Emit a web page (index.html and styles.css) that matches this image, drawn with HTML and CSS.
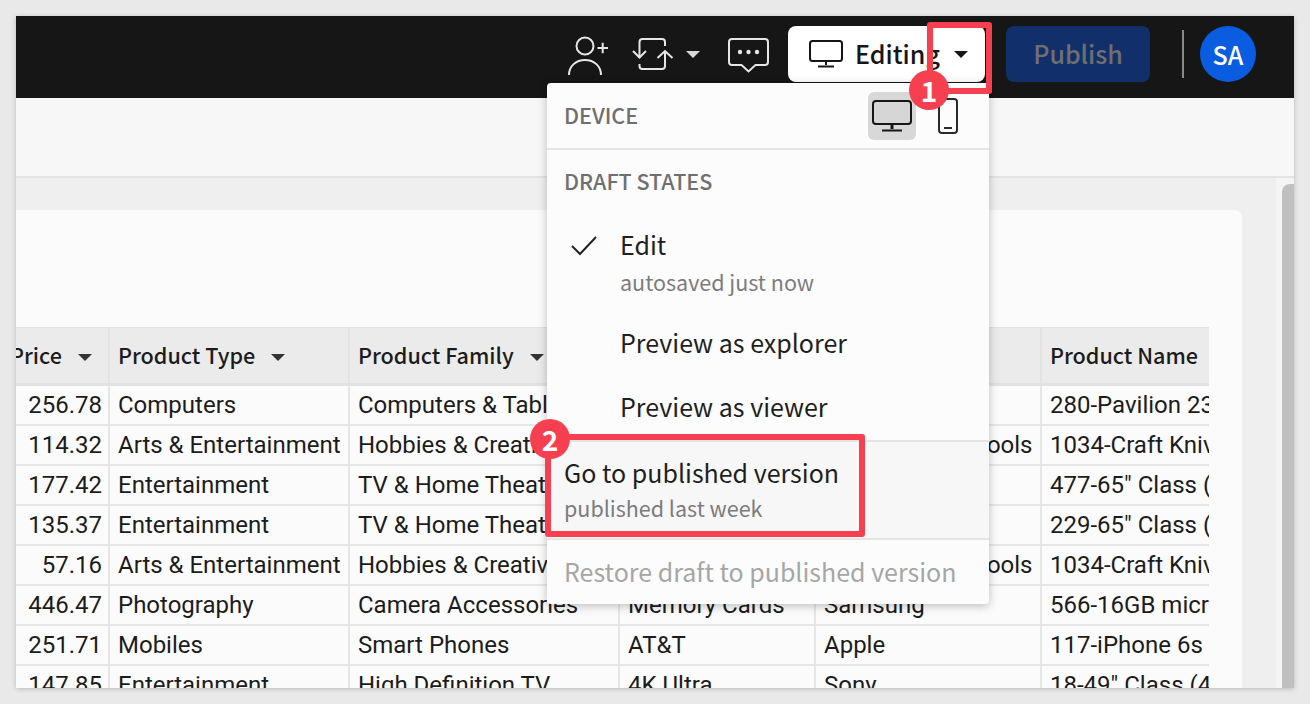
FILE: index.html
```html
<!DOCTYPE html>
<html lang="en">
<head>
    <meta charset="UTF-8">
    <title>Workbook draft states</title>
    <link rel="stylesheet" href="styles.css">
</head>
<body>
    <div class="frame">
        <header class="topbar">
            <svg class="icon-add" width="40" height="40" viewBox="0 0 40 40" fill="none" stroke="#e6e6e6" stroke-width="2">
                <circle cx="17" cy="11" r="8.500"/>
                <path d="M1 40c0-9 7-15 16-15s16 6 16 15"/>
                <path d="M29.500 13h10.500M34.700 7.800v10.400"/>
            </svg>
            <svg class="icon-sync" width="42" height="32" viewBox="0 0 42 32" fill="none" stroke="#e6e6e6" stroke-width="2">
                <path d="M7.500 20V4q0-3 3-3H30q3 0 3 3v4"/>
                <path d="M7.500 26v2q0 3 3 3H30q3 0 3-3V14"/>
                <path d="M1 13l6.500 6.500 6.500-6.500"/>
                <path d="M25.500 20l7.500-7 7.500 7"/>
            </svg>
            <span class="caret caret-light"></span>
            <svg class="icon-comment" width="41" height="35" viewBox="0 0 41 35" fill="none" stroke="#e6e6e6" stroke-width="2">
                <path d="M4 1h33q3 0 3 3v20q0 3-3 3H27.500l-7 6.500-7-6.500H4q-3 0-3-3V4q0-3 3-3z"/>
                <circle cx="12" cy="14" r="2.200" fill="#e6e6e6" stroke="none"/>
                <circle cx="20.500" cy="14" r="2.200" fill="#e6e6e6" stroke="none"/>
                <circle cx="29" cy="14" r="2.200" fill="#e6e6e6" stroke="none"/>
            </svg>
            <div class="mode-button">
                <svg width="34" height="28" viewBox="0 0 34 28" fill="none" stroke="#161616" stroke-width="2">
                    <rect x="1" y="1" width="32" height="20" rx="2.500"/>
                    <path d="M17 22v3M9 26.500h16"/>
                </svg>
                <span class="mode-label">Editing</span>
                <span class="caret caret-dark"></span>
            </div>
            <div class="publish"><span class="publish-label">Publish</span></div>
            <div class="bar-divider"></div>
            <div class="avatar">SA</div>
        </header>

        <div class="toolbar"></div>

        <div class="canvas">
            <div class="card">
                <div class="table-clip">
                    <table class="data-table">
                        <colgroup>
                            <col class="col-price">
                            <col class="col-type">
                            <col class="col-family">
                            <col class="col-line">
                            <col class="col-brand">
                            <col class="col-name">
                        </colgroup>
                        <thead>
                            <tr>
                                <th class="th-price">Price <span class="caret caret-head"></span></th>
                                <th>Product Type <span class="caret caret-head"></span></th>
                                <th>Product Family <span class="caret caret-head"></span></th>
                                <th>Product Line</th>
                                <th>Brand</th>
                                <th>Product Name</th>
                            </tr>
                        </thead>
                        <tbody>
                            <tr><td class="num">256.78</td><td>Computers</td><td>Computers &amp; Tablets</td><td>Desktops</td><td>HP</td><td>280-Pavilion 23 All-in-One</td></tr>
                            <tr><td class="num">114.32</td><td>Arts &amp; Entertainment</td><td>Hobbies &amp; Creative Arts</td><td>Crafts</td><td>Stanley Blade Tools</td><td>1034-Craft Knives Set</td></tr>
                            <tr><td class="num">177.42</td><td>Entertainment</td><td>TV &amp; Home Theater</td><td>4K Ultra</td><td>Samsung</td><td>477-65" Class (64.5" Diag.)</td></tr>
                            <tr><td class="num">135.37</td><td>Entertainment</td><td>TV &amp; Home Theater</td><td>4K Ultra</td><td>Sony</td><td>229-65" Class (64.5" Diag.)</td></tr>
                            <tr><td class="num">57.16</td><td>Arts &amp; Entertainment</td><td>Hobbies &amp; Creative Arts</td><td>Crafts</td><td>Stanley Blade Tools</td><td>1034-Craft Knives Set</td></tr>
                            <tr><td class="num">446.47</td><td>Photography</td><td>Camera Accessories</td><td>Memory Cards</td><td>Samsung</td><td>566-16GB microSD Card</td></tr>
                            <tr><td class="num">251.71</td><td>Mobiles</td><td>Smart Phones</td><td>AT&amp;T</td><td>Apple</td><td>117-iPhone 6s 64GB</td></tr>
                            <tr><td class="num">147.85</td><td>Entertainment</td><td>High Definition TV</td><td>4K Ultra</td><td>Sony</td><td>18-49" Class (48.5" Diag.)</td></tr>
                        </tbody>
                    </table>
                </div>
            </div>
            <div class="scrollbar"><div class="thumb"></div></div>
        </div>

        <div class="menu">
            <div class="menu-device">
                <span class="menu-title">DEVICE</span>
                <div class="device-icons">
                    <div class="device-btn device-on">
                        <svg width="40" height="32" viewBox="0 0 40 32" fill="none" stroke="#161616" stroke-width="2">
                            <rect x="1" y="1" width="38" height="23" rx="3" fill="#d6d6d6"/>
                            <path d="M20 25v4" stroke-width="3"/>
                            <path d="M10 30.500h20"/>
                        </svg>
                    </div>
                    <div class="device-btn">
                        <svg width="20" height="36" viewBox="0 0 20 36" fill="none" stroke="#2a2a2a" stroke-width="2">
                            <rect x="1" y="1" width="18" height="34" rx="3"/>
                            <path d="M6 30h8"/>
                        </svg>
                    </div>
                </div>
            </div>
            <div class="menu-states">
                <div class="menu-title states-title">DRAFT STATES</div>
                <div class="state-row">
                    <svg class="check" width="26" height="20" viewBox="0 0 26 20" fill="none" stroke="#222" stroke-width="2">
                        <path d="M1 10l8 8L25 1"/>
                    </svg>
                    <div class="state-edit">
                        <div class="item-main">Edit</div>
                        <div class="item-sub">autosaved just now</div>
                    </div>
                </div>
                <div class="item-main item-plain">Preview as explorer</div>
                <div class="item-main item-plain">Preview as viewer</div>
            </div>
            <div class="menu-published">
                <div class="item-main">Go to published version</div>
                <div class="item-sub">published last week</div>
            </div>
            <div class="menu-restore">Restore draft to published version</div>
        </div>

        <div class="mark mark-one"></div>
        <div class="mark mark-two"></div>
        <div class="badge badge-one">1</div>
        <div class="badge badge-two">2</div>
    </div>
</body>
</html>
```

FILE: styles.css
```css
body {
    margin: 0;
    height: 704px;
    padding: 16px;
    box-sizing: border-box;
    background: #e9e9e9;
    overflow: hidden;
    font-family: "Noto Sans CJK SC", "Noto Sans", sans-serif;
}

.frame {
    position: relative;
    width: 1278px;
    height: 672px;
    display: flex;
    flex-direction: column;
    overflow: hidden;
    background: #efefef;
    box-shadow: 0 1px 5px rgba(0, 0, 0, 0.2);
}

/* top bar */
.topbar {
    height: 82px;
    flex-shrink: 0;
    display: flex;
    align-items: center;
    padding: 0 38px 6px 0;
    box-sizing: border-box;
    background: #161616;
}

.icon-add {
    margin-left: auto;
    margin-top: 1px;
}

.icon-sync {
    margin-left: 24px;
}

.icon-comment {
    margin-left: 28px;
    margin-top: 2px;
}

.caret {
    display: inline-block;
    width: 0;
    height: 0;
    border-left: 7px solid transparent;
    border-right: 7px solid transparent;
}

.caret-light {
    margin-left: 12px;
    border-top: 7px solid #d8d8d8;
}

.caret-dark {
    margin-left: 14px;
    border-top: 7px solid #161616;
}

.caret-head {
    margin-left: 11px;
    vertical-align: 3px;
    border-top: 7px solid #333;
}

.mode-button {
    width: 197px;
    height: 56px;
    margin-left: 19px;
    padding-left: 21px;
    box-sizing: border-box;
    display: flex;
    align-items: center;
    background: #fff;
    border-radius: 8px;
}

.mode-label {
    margin: -2px 0 0 12px;
    font-size: 25px;
    font-weight: 500;
    color: #161616;
}

.publish {
    width: 144px;
    height: 56px;
    margin-left: 21px;
    display: flex;
    align-items: center;
    justify-content: center;
    background: #11306b;
    border-radius: 8px;
    font-size: 25px;
    font-weight: 500;
    color: #6f6f6f;
}

.publish-label {
    margin-top: -2px;
}

.bar-divider {
    width: 2px;
    height: 48px;
    margin-left: 32px;
    background: #8a8a8a;
}

.avatar {
    width: 56px;
    height: 56px;
    margin-left: 16px;
    display: flex;
    align-items: center;
    justify-content: center;
    background: #0a5ce0;
    border-radius: 50%;
    font-size: 25px;
    font-weight: 500;
    color: #fff;
}

.toolbar {
    height: 78px;
    flex-shrink: 0;
    background: #f7f7f7;
    border-bottom: 2px solid #e4e4e4;
}

/* canvas with table */
.canvas {
    flex: 1;
    min-height: 0;
    display: flex;
}

.card {
    flex: 1;
    min-width: 0;
    margin: 32px 34px 0 0;
    padding: 117px 33px 0 0;
    background: #fbfbfb;
    border-radius: 0 8px 0 0;
}

.table-clip {
    height: 100%;
    overflow: hidden;
}

.data-table {
    width: 1230px;
    margin-left: -36px;
    table-layout: fixed;
    border-collapse: separate;
    border-spacing: 0;
    font-family: Roboto, sans-serif;
    font-size: 24px;
    color: #1c1c1c;
}

.col-price { width: 130px; }
.col-type { width: 240px; }
.col-family { width: 270px; }
.col-line { width: 196px; }
.col-brand { width: 226px; }
.col-name { width: 168px; }

.data-table th {
    height: 59px;
    padding: 0 0 2px 8px;
    box-sizing: border-box;
    background: #ebebeb;
    border-top: 1px solid #e2e2e2;
    border-bottom: 3px solid #e2e2e2;
    border-right: 2px solid #e2e2e2;
    font-family: "Noto Sans CJK SC", sans-serif;
    font-size: 21.600px;
    font-weight: 500;
    text-align: left;
    white-space: nowrap;
    overflow: hidden;
    color: #1c1c1c;
}

.data-table .th-price {
    padding-left: 30px;
}

.data-table td {
    height: 40px;
    padding: 0 0 0 8px;
    box-sizing: border-box;
    border-bottom: 2px solid #e6e6e6;
    border-right: 2px solid #e6e6e6;
    white-space: nowrap;
    overflow: hidden;
}

.data-table .num {
    padding: 0 6px 0 0;
    text-align: right;
}

.data-table th:last-child,
.data-table td:last-child {
    border-right: none;
    overflow: visible;
}

.scrollbar {
    width: 18px;
    flex-shrink: 0;
    padding: 6px 0 0 6px;
    box-sizing: border-box;
    background: #f5f5f5;
}

.thumb {
    height: 100%;
    background: #c0c0c0;
    border-radius: 8px 0 0 0;
}

/* dropdown over the page */
.menu {
    position: absolute;
    left: 531px;
    top: 67px;
    width: 442px;
    height: 521px;
    display: flex;
    flex-direction: column;
    background: #fcfcfc;
    border-radius: 4px;
    box-shadow: 0 2px 10px rgba(0, 0, 0, 0.25);
    color: #1f1f1f;
}

.menu-device {
    height: 67px;
    flex-shrink: 0;
    display: flex;
    align-items: center;
    justify-content: space-between;
    padding: 0 23px 0 17px;
    box-sizing: border-box;
    border-bottom: 2px solid #e4e4e4;
}

.menu-title {
    font-size: 21.500px;
    font-weight: 500;
    color: #6f6f6f;
    margin-top: -2px;
}

.device-icons {
    display: flex;
    gap: 14px;
}

.device-btn {
    width: 48px;
    height: 48px;
    display: flex;
    align-items: center;
    justify-content: center;
    border-radius: 6px;
}

.device-btn:last-child {
    width: 36px;
}

.device-on {
    background: #d8d8d8;
}

.menu-states {
    flex: 1;
    padding: 16px 0 0 17px;
    box-sizing: border-box;
}

.states-title {
    line-height: 34px;
}

.state-row {
    display: flex;
    margin-top: 29px;
}

.check {
    margin: 9px 23px 0 7px;
}

.item-main {
    font-size: 25px;
    line-height: 34px;
}

.item-plain {
    margin: 28px 0 0 56px;
}

.item-plain + .item-plain {
    margin-top: 30px;
}

.item-sub {
    margin-top: 6px;
    font-size: 21.500px;
    line-height: 30px;
    color: #7c7c7c;
}

.menu-published {
    height: 100px;
    flex-shrink: 0;
    padding: 13px 0 0 17px;
    box-sizing: border-box;
    background: #f7f7f7;
    border-top: 2px solid #e4e4e4;
    border-bottom: 2px solid #e4e4e4;
}

.menu-published .item-sub {
    margin-top: 4px;
}

.menu-restore {
    height: 64px;
    flex-shrink: 0;
    padding-left: 17px;
    font-size: 25px;
    line-height: 62px;
    color: #a6a6a6;
}

/* red call-outs */
.mark {
    position: absolute;
    box-sizing: border-box;
    border: 6px solid #f7404f;
    border-radius: 3px;
}

.mark-one {
    left: 911px;
    top: 6px;
    width: 65px;
    height: 72px;
}

.mark-two {
    left: 529px;
    top: 418px;
    width: 320px;
    height: 103px;
}

.badge {
    position: absolute;
    width: 40px;
    height: 40px;
    display: flex;
    align-items: center;
    justify-content: center;
    background: #f7404f;
    border-radius: 50%;
    font-size: 28px;
    font-weight: 700;
    color: #fff;
}

.badge-one {
    left: 893px;
    top: 54px;
}

.badge-two {
    left: 514px;
    top: 403px;
}
```
